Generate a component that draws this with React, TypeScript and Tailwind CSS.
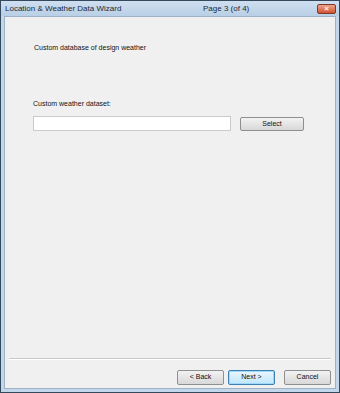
export default function App() {
  const font = { fontFamily: '"Liberation Sans", Arial, sans-serif' };

  return (
    <div
      className="w-[340px] h-[393px] flex flex-col bg-[#c3d6ea] border border-[#34495c] overflow-hidden"
      style={font}
    >
      {/* title bar */}
      <div className="h-[15px] flex items-center pl-[4px] pr-[3px] bg-gradient-to-b from-[#cfdff0] to-[#b8cfe6] text-[8px] text-[#1e2a36]">
        <span className="w-[198px]">Location &amp; Weather Data Wizard</span>
        <span className="flex-1">Page 3 (of 4)</span>
        <div className="w-[19px] h-[10px] rounded-[2px] border border-[#7a3a2a] bg-gradient-to-b from-[#eda48a] to-[#d0502f] flex items-center justify-center text-white text-[8px] font-bold leading-none">
          ×
        </div>
      </div>

      {/* client area */}
      <div className="flex-1 mx-[3px] mb-[3px] bg-[#f0f0f0] border border-[#9db2c7] flex flex-col text-[7px] text-[#111]">
        <div className="pl-[29px] pt-[26px]">Custom database of design weather</div>

        <div className="pl-[28px] pt-[45px]">Custom weather dataset:</div>

        <div className="flex items-center pl-[28px] pt-[7px] gap-[9px]">
          <div className="w-[198px] h-[15px] bg-white border border-[#c8ccd1]" />
          <button className="w-[64px] h-[14px] mt-[1px] rounded-[2px] border border-[#8e8f8f] bg-gradient-to-b from-[#f2f2f2] to-[#d8d8d8] text-[7px] text-[#111] flex items-center justify-center">
            Select
          </button>
        </div>

        <div className="flex-1" />

        <div className="mx-[4px] h-[2px] border-t border-[#c9c9c9] border-b border-b-white" />

        <div className="flex justify-end items-center gap-[4px] pr-[4px] pt-[10px] pb-[3px]">
          <button className="w-[47px] h-[15px] rounded-[2px] border border-[#8e8f8f] bg-gradient-to-b from-[#f2f2f2] to-[#d8d8d8] text-[7px] text-[#111] flex items-center justify-center">
            &lt; Back
          </button>
          <button className="w-[47px] h-[15px] rounded-[2px] border border-[#3c7fb1] bg-gradient-to-b from-[#eaf6fd] to-[#bee6fd] text-[7px] text-[#111] flex items-center justify-center shadow-[inset_0_0_0_1px_#9fd8f8]">
            Next &gt;
          </button>
          <button className="w-[47px] h-[15px] ml-[5px] rounded-[2px] border border-[#8e8f8f] bg-gradient-to-b from-[#f2f2f2] to-[#d8d8d8] text-[7px] text-[#111] flex items-center justify-center">
            Cancel
          </button>
        </div>
      </div>
    </div>
  );
}
